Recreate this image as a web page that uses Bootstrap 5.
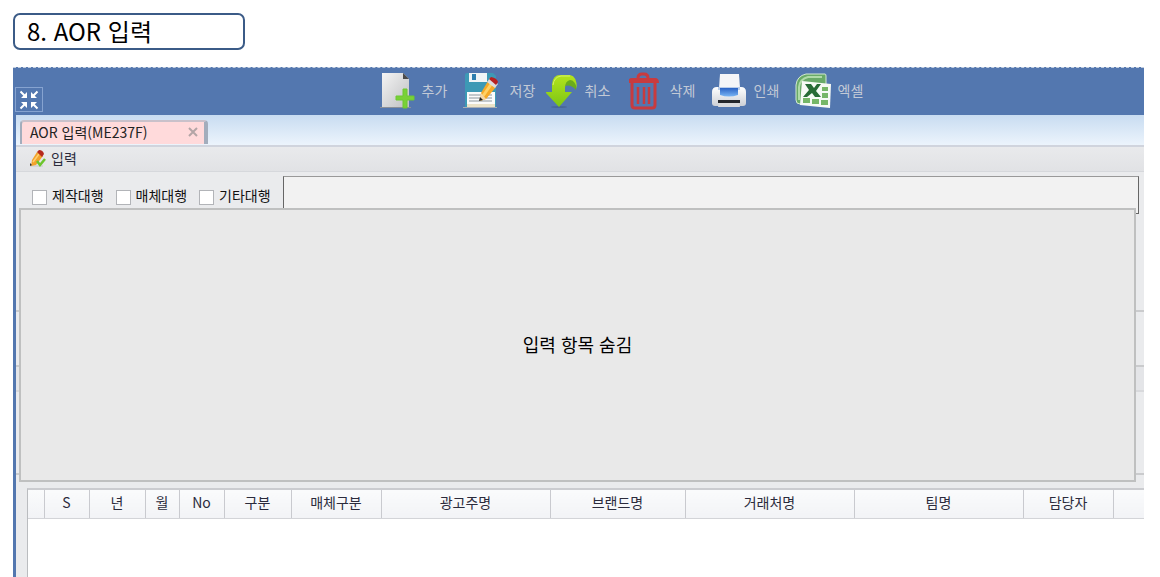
<!DOCTYPE html>
<html lang="ko">
<head>
<meta charset="utf-8">
<meta name="viewport" content="width=device-width, initial-scale=1">
<title>AOR 입력</title>
<link href="https://cdn.jsdelivr.net/npm/bootstrap@5.3.0/dist/css/bootstrap.min.css" rel="stylesheet">
<style>
  body { font-family: "Noto Sans CJK KR", sans-serif; font-size: 14px; line-height: 20px; color: #222; background: #fff; }
  .page-frame { padding: 13px 16px 0 13px; }
  .page-title { width: 232px; height: 37px; margin-bottom: 17px; padding-left: 12px; border: 2px solid #3b5b87; border-radius: 7px; font-size: 24px; line-height: 32px; font-weight: 400; color: #000; }
  .toolbar { height: 48px; padding: 0 0 4px 100px; background: #5377af; border-top: 1px dashed #c3cfe0; }
  .tool-btn { width: 83px; padding: 0; gap: 6px; border: 0; background: none; color: #c3cad6; white-space: nowrap; text-align: left; }
  .shrink-btn { left: 2px; bottom: 3px; width: 28px; height: 25px; padding: 0; border: 1px solid #86a3d0; background: #5377af; }
  .workspace { border-left: 3px solid #5377af; background: #eaebed; }
  .tab-strip { height: 32px; padding: 5px 0 0 4px; background: linear-gradient(#c8dcf1, #ecf4fc); border-bottom: 2px solid #d0d4dd; }
  .doc-tab { width: 188px; height: 24px; padding: 0 5px 2px 8px; background: #ffdadb; border: solid #a3adbc; border-width: 2px 4px 0 2px; border-top-color: #c9c1ca; border-radius: 4px 4px 0 0; }
  .doc-tab a { color: #222; }
  .close-btn { width: 12px; height: 12px; padding: 0; border: 0; background: none; }
  .panel-head { height: 25px; padding: 0 0 3px 13px; gap: 4px; background: linear-gradient(#e9eaec, #e1e2e5); border-bottom: 1px solid #d6d8dc; color: #2b2b3c; }
  .form-row-top { padding: 4px 5px 0 16px; gap: 12px; height: 42px; }
  .opt { gap: 5px; padding-top: 9px; }
  .opt .form-check-input { width: 15px; height: 15px; margin: 5px 0 0; border: 1px solid #b2b4b8; border-radius: 0; background-color: #fff; }
  .opt label { color: #111; }
  .memo-box { height: 38px; min-width: 0; border: 1px solid #666; border-top-color: #999; border-radius: 0; background: #f2f2f2; }
  .form-area { min-height: 316px; }
  .section-block { border-bottom: 2px solid #cacbcd; }
  .block-a { height: 98px; }
  .block-b { height: 55px; }
  .block-c { height: 25px; background: #e4e5e8; border-bottom-color: #d8d9dc; }
  .block-d { height: 83px; }
  .hidden-cover { top: 36px; left: 3px; right: 8px; bottom: 6px; padding-bottom: 3px; background: #e9e9e9; border: 2px solid #bfc0c0; color: #000; font-size: 18px; }
  .grid-wrap { margin-left: 11px; min-height: 89px; background: #fff; border-left: 1px solid #babcbf; border-top: 2px solid #cbccd0; }
  .data-grid { table-layout: fixed; width: 100%; }
  .data-grid th { height: 28px; padding: 0 0 4px; line-height: 20px; font-weight: 400; text-align: center; vertical-align: middle; color: #2b2b3c; background: linear-gradient(#fafbfc, #f2f3f6); border-right: 1px solid #c9cacf; border-bottom: 1px solid #d3d4d8; white-space: nowrap; }
  .data-grid th:last-child { border-right: 0; }
  .c-mark { width: 16px; } .c-45 { width: 45px; } .c-56 { width: 56px; } .c-34 { width: 34px; }
  .c-67 { width: 67px; } .c-90 { width: 90px; } .c-169 { width: 169px; } .c-135 { width: 135px; }
</style>
</head>
<body>
<div class="page-frame d-flex flex-column min-vh-100">
  <h1 class="page-title">8. AOR 입력</h1>

  <header class="toolbar d-flex justify-content-center align-items-stretch position-relative">
    <button type="button" class="shrink-btn position-absolute d-flex align-items-center justify-content-center" aria-label="화면 축소">
      <svg width="20" height="20" viewBox="0 0 20 20" fill="#fff" stroke="#fff" stroke-width="2"><path d="M1.500 1.500 6 6M18.500 1.500 14 6M1.500 18.500 6 14M18.500 18.500 14 14"/><path stroke="none" d="M8 2v6H2zM12 2v6h6zM8 18v-6H2zM12 18v-6h6z"/></svg>
    </button>
    <button type="button" class="tool-btn d-flex align-items-center">
      <svg width="36" height="40" viewBox="0 0 36 40"><defs><linearGradient id="gPaper" x2="1" y2="1"><stop stop-color="#f4f4f4"/><stop offset="1" stop-color="#bfc0c2"/></linearGradient></defs><path d="M0 37h31v1H0z" fill="#8b9099"/><path d="M2 3h21l6 6v28H2z" fill="url(#gPaper)"/><path d="M23 3l6 6h-6z" fill="#4b4b4b"/><path d="M23 19h4v7h7v4h-7v8h-4v-8h-7v-4h7z" fill="#79d136" stroke="#6cc832"/></svg>
      <span>추가</span>
    </button>
    <button type="button" class="tool-btn d-flex align-items-center">
      <svg width="41" height="40" viewBox="0 0 41 40"><path d="M0 37h34v1H0z" fill="#a9aeb4"/><path d="M2 5q0-2 2-2h26l3 3v31H2z" fill="#3d99b5"/><path d="M6 3h18v9H6z" fill="#f1f5f7"/><path d="M9 4h4v6H9z" fill="#2f7fb0"/><path d="M4 22h28v12H4z" fill="#fbfbfb"/><path d="M4 34h28v3H4z" fill="#ebe2c8"/><path d="M6 25h23M6 28h23M6 31h23" stroke="#8b959d"/><path d="M25 11l8 6-10 12-6 2 1-8z" fill="#f5a928"/><path d="M29 13l-9 13" stroke="#ffd165" stroke-width="3"/><path d="M18 23l5 6-7 2z" fill="#f2d6a8"/><path d="M17 27l3 3-4 1z" fill="#222"/><path d="M24 12l3-4 8 6-3 4z" fill="#ddd"/><path d="M26 9l2-2q6 1 7 5l-2 3z" fill="#b82020"/></svg>
      <span>저장</span>
    </button>
    <button type="button" class="tool-btn d-flex align-items-center">
      <svg width="33" height="40" viewBox="0 0 33 40"><defs><linearGradient id="gArrow" x2="0" y2="1"><stop stop-color="#b3e41c"/><stop offset="1" stop-color="#7cc514"/></linearGradient></defs><ellipse cx="13" cy="37" rx="8" ry="1" fill="#48679a"/><path d="M19 16q1-8 7-8 5 4 4 12-5-6-11-4z" fill="#6aac1c"/><path d="M6 22V14Q7 5 14 5h10q7 1 7 14-2-9-7-9-5 1-5 8v4h7L13 37-1 22z" fill="url(#gArrow)"/><path d="M7 15q1-8 8-9h9" fill="none" stroke="#d4f26a"/></svg>
      <span>취소</span>
    </button>
    <button type="button" class="tool-btn d-flex align-items-center">
      <svg width="35" height="40" viewBox="0 0 35 40" fill="none" stroke="#c83b3f" stroke-width="3"><path d="M9 8q0-4 4-4h2q4 0 4 4M3 13v22q0 3 3 3h17q3 0 3-3V13"/><path d="M-1 13q0-5 4-5h23q4 0 4 5z" fill="#c83b3f" stroke="none"/><path d="M9 17v17M15 17v17M20 17v17" stroke-width="2.500"/></svg>
      <span>삭제</span>
    </button>
    <button type="button" class="tool-btn d-flex align-items-center">
      <svg width="36" height="40" viewBox="0 0 36 40"><defs><linearGradient id="gPrn" x2="0" y2="1"><stop stop-color="#fff"/><stop offset="1" stop-color="#cdd0d6"/></linearGradient><linearGradient id="gGlass" x2="0" y2="1"><stop stop-color="#2a62c4"/><stop offset="1" stop-color="#7ab6f5"/></linearGradient></defs><path d="M0 22q0-5 5-5h24q5 0 5 5v11q0 3-3 3H3q-3 0-3-3z" fill="url(#gPrn)"/><path d="M8 4h19l1 14H7z" fill="#f4f5f8"/><path d="M6 17h22v3H6z" fill="#b9cdea"/><path d="M8 18h18v7q-9 3-18 0z" fill="url(#gGlass)"/><path d="M6 30h22v3H6z" fill="#24262b"/><path d="M7 33h20l1 4H6z" fill="#d9dadd"/></svg>
      <span>인쇄</span>
    </button>
    <button type="button" class="tool-btn d-flex align-items-center">
      <svg width="37" height="40" viewBox="0 0 37 40"><path d="M11 4h19q1 0 1 2v28H5q-4 0-4-4V15Q2 6 11 4z" fill="#69aa68" stroke="#d4ead2"/><path d="M4 30V17Q5 9 13 7h14" fill="none" stroke="#b0dba8" stroke-width="2"/><path d="M7 11l29 3-1 24-30-3z" fill="#f6faf5"/><path d="M10 14h6l3 4 3-4h4l-5 7 5 6h-6l-3-4-5 4H8l6-7z" fill="#276b35"/><path d="M27 17h6v4h-6zM27 23h6v5h-6zM26 30h7v5h-7zM17 29h7v5h-7zM8 28h7v5H8z" fill="#76b768"/></svg>
      <span>엑셀</span>
    </button>
  </header>

  <main class="workspace flex-grow-1 d-flex flex-column">
    <nav class="tab-strip">
      <div class="doc-tab d-flex align-items-center justify-content-between">
        <a href="#entry" class="text-decoration-none">AOR 입력(ME237F)</a>
        <button type="button" class="close-btn d-flex" aria-label="닫기"><svg width="12" height="12" viewBox="0 0 12 12"><path d="M2 2l8 8M10 2l-8 8" stroke="#b3a5a6" stroke-width="2"/></svg></button>
      </div>
    </nav>

    <section id="entry">
      <div class="panel-head d-flex align-items-center">
        <svg width="18" height="18" viewBox="0 0 18 18"><path d="M1 17h13" stroke="#c5c7c9"/><path d="M8 3l6 4-7 9-5 1 1-6z" fill="#f2a32c"/><path d="M10 5l-6 8" stroke="#ffd070" stroke-width="1.500"/><path d="M8 3l2-2q4 0 5 4l-2 3z" fill="#b52a1e"/><path d="M1 14l2 2-2 1z" fill="#333"/><path d="M8 12l3 4 5-6" fill="none" stroke="#6cc52d" stroke-width="2.500"/></svg>
        <span>입력</span>
      </div>

      <form class="form-area position-relative">
        <div class="form-row-top d-flex">
          <div class="opt d-flex"><input class="form-check-input" type="checkbox" id="optMake"><label for="optMake">제작대행</label></div>
          <div class="opt d-flex"><input class="form-check-input" type="checkbox" id="optMedia"><label for="optMedia">매체대행</label></div>
          <div class="opt d-flex"><input class="form-check-input" type="checkbox" id="optEtc"><label for="optEtc">기타대행</label></div>
          <input type="text" class="memo-box flex-grow-1" aria-label="비고">
        </div>
        <div class="section-block block-a"></div>
        <div class="section-block block-b"></div>
        <div class="section-block block-c"></div>
        <div class="section-block block-d"></div>
        <div class="hidden-cover position-absolute d-flex align-items-center justify-content-center">입력 항목 숨김</div>
      </form>
    </section>

    <section class="grid-wrap flex-grow-1">
      <table class="data-grid">
        <colgroup><col class="c-mark"><col class="c-45"><col class="c-56"><col class="c-34"><col class="c-45"><col class="c-67"><col class="c-90"><col class="c-169"><col class="c-135"><col class="c-169"><col class="c-169"><col class="c-90"><col></colgroup>
        <thead><tr><th></th><th>S</th><th>년</th><th>월</th><th>No</th><th>구분</th><th>매체구분</th><th>광고주명</th><th>브랜드명</th><th>거래처명</th><th>팀명</th><th>담당자</th><th></th></tr></thead>
      </table>
    </section>
  </main>
</div>
<script src="https://cdn.jsdelivr.net/npm/bootstrap@5.3.0/dist/js/bootstrap.bundle.min.js"></script>
</body>
</html>
